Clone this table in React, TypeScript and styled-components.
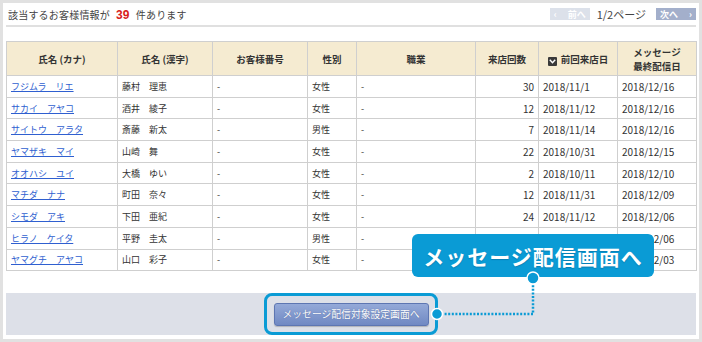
import React from "react";
import styled, { createGlobalStyle } from "styled-components";

const Global = createGlobalStyle`
  html, body { margin: 0; padding: 0; background: #fff; }
  body { font-family: "Noto Sans CJK JP", "Noto Sans", sans-serif; color: #333; overflow: hidden; }
  * { box-sizing: border-box; }
`;

const Frame = styled.div`
  position: relative;
  width: 702px;
  height: 342px;
  border: 3px solid #e1e1e1;
  padding: 0 3px;
  background: #fff;
`;

const TopBar = styled.div`
  height: 22px;
  display: flex;
  align-items: center;
  justify-content: space-between;
  padding: 0 0 0 2px;
`;

const Summary = styled.div`
  font-size: 10px;
  color: #444;
  letter-spacing: 0.2px;
`;

const Count = styled.span`
  color: #d81c1c;
  font-weight: 700;
  font-size: 12px;
  margin: 0 6px;
  font-family: "Liberation Sans", sans-serif;
`;

const Pager = styled.div`
  display: flex;
  align-items: center;
  gap: 7px;
`;

const PageButton = styled.span<{ $disabled?: boolean }>`
  display: inline-flex;
  align-items: center;
  justify-content: space-between;
  width: 40px;
  height: 12px;
  padding: 0 4px;
  font-size: 9px;
  font-weight: 700;
  color: #fff;
  background: ${(p) => (p.$disabled ? "#dce1ea" : "#a3afcb")};
`;

const PageLabel = styled.span`
  font-size: 11px;
  color: #444;
  margin-right: 3px;
`;

const Rule = styled.div`
  height: 2px;
  background: #e0e0e0;
`;

const TableWrap = styled.div`
  margin-top: 14px;
`;

const Table = styled.table`
  width: 690px;
  border-collapse: collapse;
  table-layout: fixed;
`;

const Th = styled.th`
  background: #f5ebd1;
  border: 1px solid #cfcfcf;
  height: 34px;
  font-size: 9.5px;
  font-weight: 700;
  color: #333;
  text-align: center;
  line-height: 14px;
  padding: 0 2px;
`;

const Td = styled.td<{ $align?: "left" | "right"; $num?: boolean }>`
  border: 1px solid #cfcfcf;
  height: 21.7px;
  padding: 0 4px;
  font-size: ${(p) => (p.$num ? "10px" : "9px")};
  color: #333;
  text-align: ${(p) => p.$align || "left"};
  white-space: nowrap;
  overflow: hidden;
`;

const NameLink = styled.a`
  color: #2f5fd0;
  text-decoration: underline;
  font-size: 9px;
`;

const SortIcon = styled.span`
  display: inline-flex;
  align-items: center;
  justify-content: center;
  width: 9px;
  height: 9px;
  background: #3a3a3a;
  border-radius: 1px;
  margin-right: 4px;
  vertical-align: -1px;
`;

const Panel = styled.div`
  margin-top: 22px;
  height: 42px;
  background: #dde0e8;
  display: flex;
  align-items: center;
  justify-content: center;
`;

const Highlight = styled.div`
  position: relative;
  display: flex;
  align-items: center;
  justify-content: center;
  width: 174px;
  height: 42px;
  border: 3px solid #0a9bd5;
  border-radius: 8px;
`;

const ActionButton = styled.button`
  width: 155px;
  height: 23px;
  border: 1px solid #5d76b2;
  border-radius: 3px;
  background: linear-gradient(#94a9d8, #7089c3);
  color: #fff;
  font-family: "Noto Sans CJK JP", sans-serif;
  font-size: 9.8px;
  padding: 0;
  text-shadow: 0 0 1px rgba(40, 60, 110, 0.6);
  box-shadow: 0 1px 1px rgba(0, 0, 0, 0.2);
`;

const Callout = styled.div`
  position: absolute;
  left: 409px;
  top: 231px;
  width: 242px;
  height: 43px;
  background: #0a9bd5;
  border-radius: 6px;
  color: #fff;
  font-size: 21px;
  font-weight: 700;
  display: flex;
  align-items: center;
  justify-content: center;
  letter-spacing: 1px;
  text-shadow: 0 1px 1px rgba(0, 60, 100, 0.3);
`;

const Connector = styled.svg`
  position: absolute;
  left: 0;
  top: 0;
  pointer-events: none;
`;

type Row = {
  kana: string;
  kanji: string;
  sex: string;
  visits: number;
  last: string;
  msg: string;
};

const rows: Row[] = [
  { kana: "フジムラ　リエ", kanji: "藤村　理恵", sex: "女性", visits: 30, last: "2018/11/1", msg: "2018/12/16" },
  { kana: "サカイ　アヤコ", kanji: "酒井　綾子", sex: "女性", visits: 12, last: "2018/11/12", msg: "2018/12/16" },
  { kana: "サイトウ　アラタ", kanji: "斎藤　新太", sex: "男性", visits: 7, last: "2018/11/14", msg: "2018/12/16" },
  { kana: "ヤマザキ　マイ", kanji: "山崎　舞", sex: "女性", visits: 22, last: "2018/10/31", msg: "2018/12/15" },
  { kana: "オオハシ　ユイ", kanji: "大橋　ゆい", sex: "女性", visits: 2, last: "2018/10/11", msg: "2018/12/10" },
  { kana: "マチダ　ナナ", kanji: "町田　奈々", sex: "女性", visits: 12, last: "2018/11/31", msg: "2018/12/09" },
  { kana: "シモダ　アキ", kanji: "下田　亜紀", sex: "女性", visits: 24, last: "2018/11/12", msg: "2018/12/06" },
  { kana: "ヒラノ　ケイタ", kanji: "平野　圭太", sex: "男性", visits: 9, last: "2018/11/10", msg: "2018/12/06" },
  { kana: "ヤマグチ　アヤコ", kanji: "山口　彩子", sex: "女性", visits: 15, last: "2018/11/08", msg: "2018/12/03" },
];

const widths = [111, 95, 95, 49, 119, 63, 79, 79];

export default function App() {
  return (
    <>
      <Global />
      <Frame>
        <TopBar>
          <Summary>
            該当するお客様情報が<Count>39</Count>件あります
          </Summary>
          <Pager>
            <PageButton $disabled>
              <span>‹</span>
              <span>前へ</span>
            </PageButton>
            <PageLabel>1/2ページ</PageLabel>
            <PageButton>
              <span>次へ</span>
              <span>›</span>
            </PageButton>
          </Pager>
        </TopBar>
        <Rule />
        <TableWrap>
          <Table>
            <colgroup>
              {widths.map((w, i) => (
                <col key={i} style={{ width: w }} />
              ))}
            </colgroup>
            <thead>
              <tr>
                <Th>氏名 (カナ)</Th>
                <Th>氏名 (漢字)</Th>
                <Th>お客様番号</Th>
                <Th>性別</Th>
                <Th>職業</Th>
                <Th>来店回数</Th>
                <Th>
                  <SortIcon>
                    <svg width="7" height="5" viewBox="0 0 7 5">
                      <path d="M0.8 0.8 L3.5 3.8 L6.2 0.8" fill="none" stroke="#fff" strokeWidth="1.4" />
                    </svg>
                  </SortIcon>
                  前回来店日
                </Th>
                <Th>
                  メッセージ
                  <br />
                  最終配信日
                </Th>
              </tr>
            </thead>
            <tbody>
              {rows.map((r) => (
                <tr key={r.kana}>
                  <Td>
                    <NameLink href="#">{r.kana}</NameLink>
                  </Td>
                  <Td>{r.kanji}</Td>
                  <Td>-</Td>
                  <Td>{r.sex}</Td>
                  <Td>-</Td>
                  <Td $align="right" $num>{r.visits}</Td>
                  <Td $num>{r.last}</Td>
                  <Td $num>{r.msg}</Td>
                </tr>
              ))}
            </tbody>
          </Table>
        </TableWrap>
        <Panel>
          <Highlight>
            <ActionButton>メッセージ配信対象設定画面へ</ActionButton>
          </Highlight>
        </Panel>
        <Callout>メッセージ配信画面へ</Callout>
        <Connector width="696" height="336" viewBox="0 0 696 336">
          <path
            d="M530 275 L530 311 L436 311"
            fill="none"
            stroke="#0a9bd5"
            strokeWidth="2.5"
            strokeDasharray="2 1.6"
          />
          <circle cx="530" cy="275" r="6" fill="#0a9bd5" stroke="#fff" strokeWidth="1.5" />
          <circle cx="434" cy="311" r="5.5" fill="#0a9bd5" stroke="#fff" strokeWidth="1.5" />
        </Connector>
      </Frame>
    </>
  );
}
